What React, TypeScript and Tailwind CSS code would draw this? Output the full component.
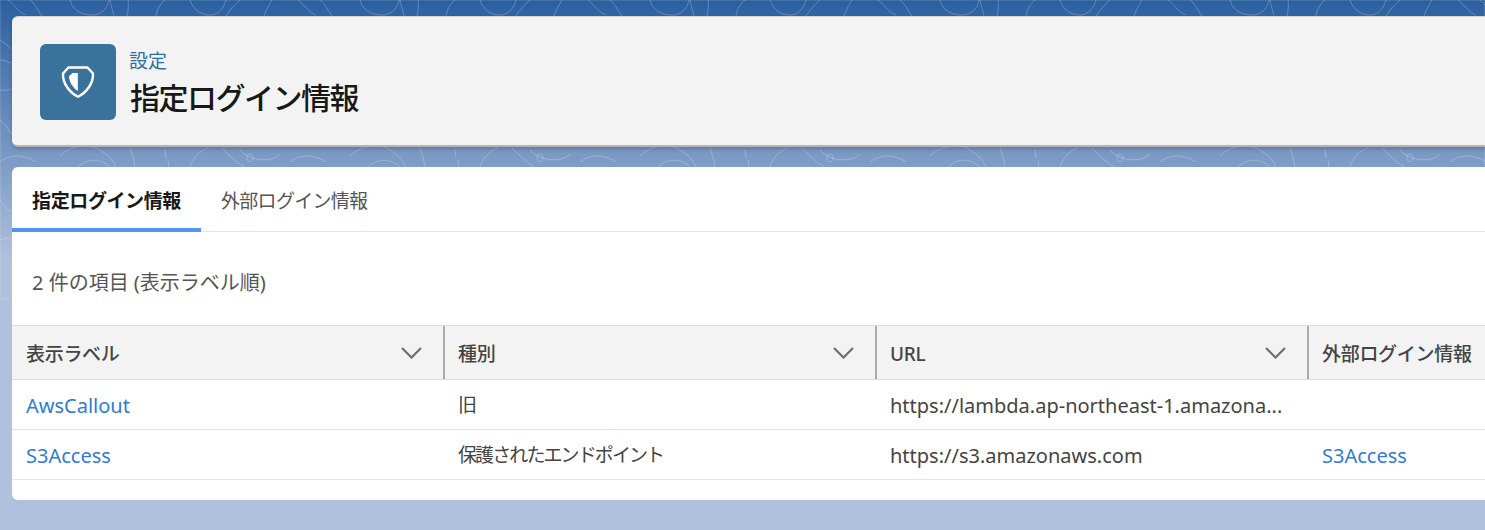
const FONT = "font-['Noto_Sans','Noto_Sans_CJK_JP',sans-serif]";

const columns = ["表示ラベル", "種別", "URL", "外部ログイン情報"];

const rows = [
  { label: "AwsCallout", type: "旧", url: "https://lambda.ap-northeast-1.amazona...", login: "" },
  { label: "S3Access", type: "保護されたエンドポイント", url: "https://s3.amazonaws.com", login: "S3Access" },
];

function Contours() {
  return (
    <svg className="absolute left-0 top-0 w-full h-[300px]" fill="none" stroke="#ffffff" strokeOpacity={0.24} strokeWidth={1}>
      <defs>
        <pattern id="topo" width="290" height="300" patternUnits="userSpaceOnUse">
          <path d="M8 0c8 6 10 12 18 15M30 0c6 5 8 11 12 16M70 0c2 8 8 14 20 15s18-8 19-15M110 0c1 6 3 11 4 16M128 0c1 6 0 11-1 16M165 0c-6 5-8 10-9 16M190 0c2 7 8 14 18 15s16-7 18-15M240 0c-6 5-10 10-14 16M272 0c-3 5-6 10-8 16" />
          <path d="M0 162c10-8 24-8 36 0M60 156c10-10 28-14 40-6s12 10 16 17M78 167c8-8 22-10 32 0M130 148c2 6 4 12 5 19M165 150l1 8M168 160l1 7M190 167c2-8 10-17 18-19M222 148c8 8 14 14 22 19M240 150c8 10 30 14 40 4M250 154a3 4 0 1 0 .1 0" />
          <path d="M0 40c4 3 8 5 11 9M0 90c4 1 8 0 11-1M0 120c4 3 8 8 11 14M0 60c4 0 7 2 11 3M0 200c4 6 8 10 11 12M0 240c4-2 8-2 11 0" />
        </pattern>
      </defs>
      <rect width="100%" height="100%" fill="url(#topo)" />
    </svg>
  );
}

function ShieldIcon() {
  return (
    <svg width="34" height="34" viewBox="0 0 34 34" fill="none">
      <path
        d="M7.500 2.500H26.500L32 8.500C32.500 18.500 25.500 27.500 17 31.800C8.500 27.500 1.500 18.500 2 8.500Z"
        stroke="#ffffff"
        strokeWidth="2.400"
        strokeLinejoin="round"
      />
      <path d="M16.800 8H11.500L8 11.200C8.300 17 11.500 22.500 16.800 26Z" fill="#ffffff" />
    </svg>
  );
}

function Chevron() {
  return (
    <svg width="21" height="13" viewBox="0 0 21 13" fill="none" className="shrink-0">
      <path d="M1 2l9.500 9.500L20 2" stroke="#706e6b" strokeWidth="2.200" />
    </svg>
  );
}

export default function App() {
  return (
    <div className={`relative h-[530px] overflow-hidden bg-gradient-to-b from-[#2a5f9f] from-0% to-[#b0c1dd] to-[49%] ${FONT}`}>
      <Contours />
      <div className="relative pl-3 pt-4 -mr-5">
        {/* Page header */}
        <div className="flex h-[131px] items-center gap-[14px] rounded-l-md border-t border-t-[#d4d4d4] border-b-2 border-b-[#b5b5b5] bg-[#f3f3f3] pl-7 pt-0.5 shadow-[0_2px_4px_rgba(0,0,0,0.2)]">
          <div className="flex h-[76px] w-[76px] items-center justify-center rounded-md bg-[#3b729c]">
            <ShieldIcon />
          </div>
          <div className="mt-[2px]">
            <div className="-ml-px text-[19px] leading-[30px] text-[#2e6fa8]">設定</div>
            <h1 className="text-[30px] font-medium leading-[44px] tracking-[-1.5px] text-[#181818]">指定ログイン情報</h1>
          </div>
        </div>

        {/* Content card */}
        <div className="mt-5 h-[333px] rounded-l-md bg-white">
          <div className="flex h-[65px] items-stretch border-b border-[#e5e5e5]">
            <div className="-mb-px flex w-[189px] items-center justify-center border-b-4 border-[#5295f0] pt-2 text-[19px] font-bold tracking-[-0.4px] text-[#181818]">
              指定ログイン情報
            </div>
            <div className="flex items-center pl-5 pt-1 text-[19px] tracking-[-0.7px] text-[#555555]">外部ログイン情報</div>
          </div>

          <div className="flex h-[93px] items-center pl-5 pt-2 text-[20px] text-[#555555]">2 件の項目 (表示ラベル順)</div>

          <table className="w-[1728px] table-fixed border-collapse text-[20px]">
            <thead>
              <tr className="h-[54px] border-y border-[#dddddd] bg-[#f3f3f3]">
                {columns.map((name, i) => (
                  <th key={name} className="w-[432px] p-0 text-left text-[19px] font-medium tracking-[-0.3px] text-[#444444]">
                    <div className={`-mr-px flex h-[53px] items-center justify-between pl-[14px] pr-[21px] ${i < 3 ? "border-r-2 border-[#aaaaaa]" : ""}`}>
                      <span className="pt-1">{name}</span>
                      {i < 3 && <Chevron />}
                    </div>
                  </th>
                ))}
              </tr>
            </thead>
            <tbody>
              {rows.map((row) => (
                <tr key={row.label} className="h-[50px] border-b border-[#e5e5e5]">
                  <td className="pl-[14px] pt-0.5 text-[#2f7bd6]">{row.label}</td>
                  <td className="pl-[14px] pt-0.5 text-[19px] tracking-[-1.9px] text-[#444444]">{row.type}</td>
                  <td className="pl-[14px] pt-0.5 text-[#444444]">
                    <div className="whitespace-nowrap">{row.url}</div>
                  </td>
                  <td className="pl-[14px] pt-0.5 text-[#2f7bd6]">{row.login}</td>
                </tr>
              ))}
            </tbody>
          </table>
        </div>
      </div>
    </div>
  );
}
